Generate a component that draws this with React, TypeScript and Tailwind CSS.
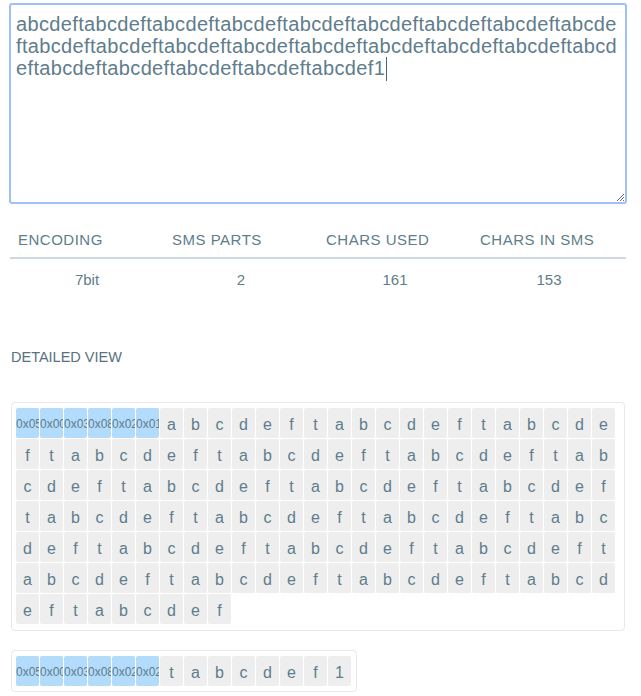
import React from 'react';

const TEXT = 'abcdeft'.repeat(22) + 'abcdef' + '1';
const LINES = [TEXT.slice(0, 61), TEXT.slice(61, 123), TEXT.slice(123)];

const PART_ONE = ['0x05', '0x00', '0x03', '0x08', '0x02', '0x01'];
const PART_TWO = ['0x05', '0x00', '0x03', '0x08', '0x02', '0x02'];

const STATS = [
	{ label: 'ENCODING', value: '7bit' },
	{ label: 'SMS PARTS', value: '2' },
	{ label: 'CHARS USED', value: '161' },
	{ label: 'CHARS IN SMS', value: '153' },
];

function Cell({ value, header }: { value: string; header?: boolean }) {
	return (
		<div
			className={
				header
					? 'w-[23px] h-[30px] overflow-hidden whitespace-nowrap text-center rounded-[2px] bg-[#b3dcfc] text-[12px] leading-[33px]'
					: 'w-[23px] h-[30px] overflow-hidden whitespace-nowrap text-center rounded-[2px] bg-[#eeeeee] text-[16px] leading-[33px]'
			}
		>
			{value}
		</div>
	);
}

function Part({ udh, chars, wide }: { udh: string[]; chars: string; wide?: boolean }) {
	return (
		<div
			className={
				wide
					? 'w-[614px] flex flex-wrap gap-[1px] border border-[#e8e8e8] rounded-[4px] pl-[4px] pr-[9px] pt-[5px] pb-[6px]'
					: 'self-start flex flex-wrap gap-[1px] border border-[#e8e8e8] rounded-[4px] pl-[4px] pr-[5px] pt-[5px] pb-[5px]'
			}
		>
			{udh.map((h, i) => (
				<Cell key={'h' + i} value={h} header />
			))}
			{chars.split('').map((c, i) => (
				<Cell key={'c' + i} value={c} />
			))}
		</div>
	);
}

export default function App() {
	return (
		<div
			className="w-[641px] h-[696px] overflow-hidden bg-white text-[#607d8b] flex flex-col"
			style={{ fontFamily: '"Liberation Sans", Arial, sans-serif' }}
		>
			{/* message box */}
			<div className="relative mt-[3px] ml-[9px] w-[618px] h-[201px] border-2 border-[#9fc1f7] rounded-[3px] px-[5px] pt-[8px] text-[20px] leading-[22px] tracking-[0.35px] whitespace-nowrap">
				{LINES.map((line, i) => (
					<div key={i}>
						{line}
						{i === LINES.length - 1 && (
							<span className="inline-block w-[1px] h-[24px] bg-[#4a6572] align-[-6px] ml-[1px]" />
						)}
					</div>
				))}
				<svg className="absolute right-[0px] bottom-[0px]" width="9" height="9" viewBox="0 0 9 9">
					<path d="M1 8 L8 1 M4 8 L8 4 M7 8 L8 7" stroke="#6b6b6b" strokeWidth="1" />
				</svg>
			</div>

			{/* stats table */}
			<div className="mt-[18px] ml-[10px] w-[616px]">
				<div className="grid grid-cols-4 h-[37px] pt-[2px] items-center border-b-2 border-[#cfd8dc] text-[15px] tracking-[0.5px]">
					{STATS.map(s => (
						<div key={s.label} className="pl-[8px]">
							{s.label}
						</div>
					))}
				</div>
				<div className="grid grid-cols-4 h-[40px] pt-[3px] items-center text-[15px]">
					{STATS.map(s => (
						<div key={s.label} className="text-center">
							{s.value}
						</div>
					))}
				</div>
			</div>

			<div className="mt-[48px] ml-[11px] h-[20px] leading-[20px] text-[14.5px] text-[#58727f]">
				DETAILED VIEW
			</div>

			<div className="mt-[35px] ml-[11px] flex flex-col gap-[19px]">
				<Part udh={PART_ONE} chars={TEXT.slice(0, 153)} wide />
				<Part udh={PART_TWO} chars={TEXT.slice(153)} />
			</div>
		</div>
	);
}
